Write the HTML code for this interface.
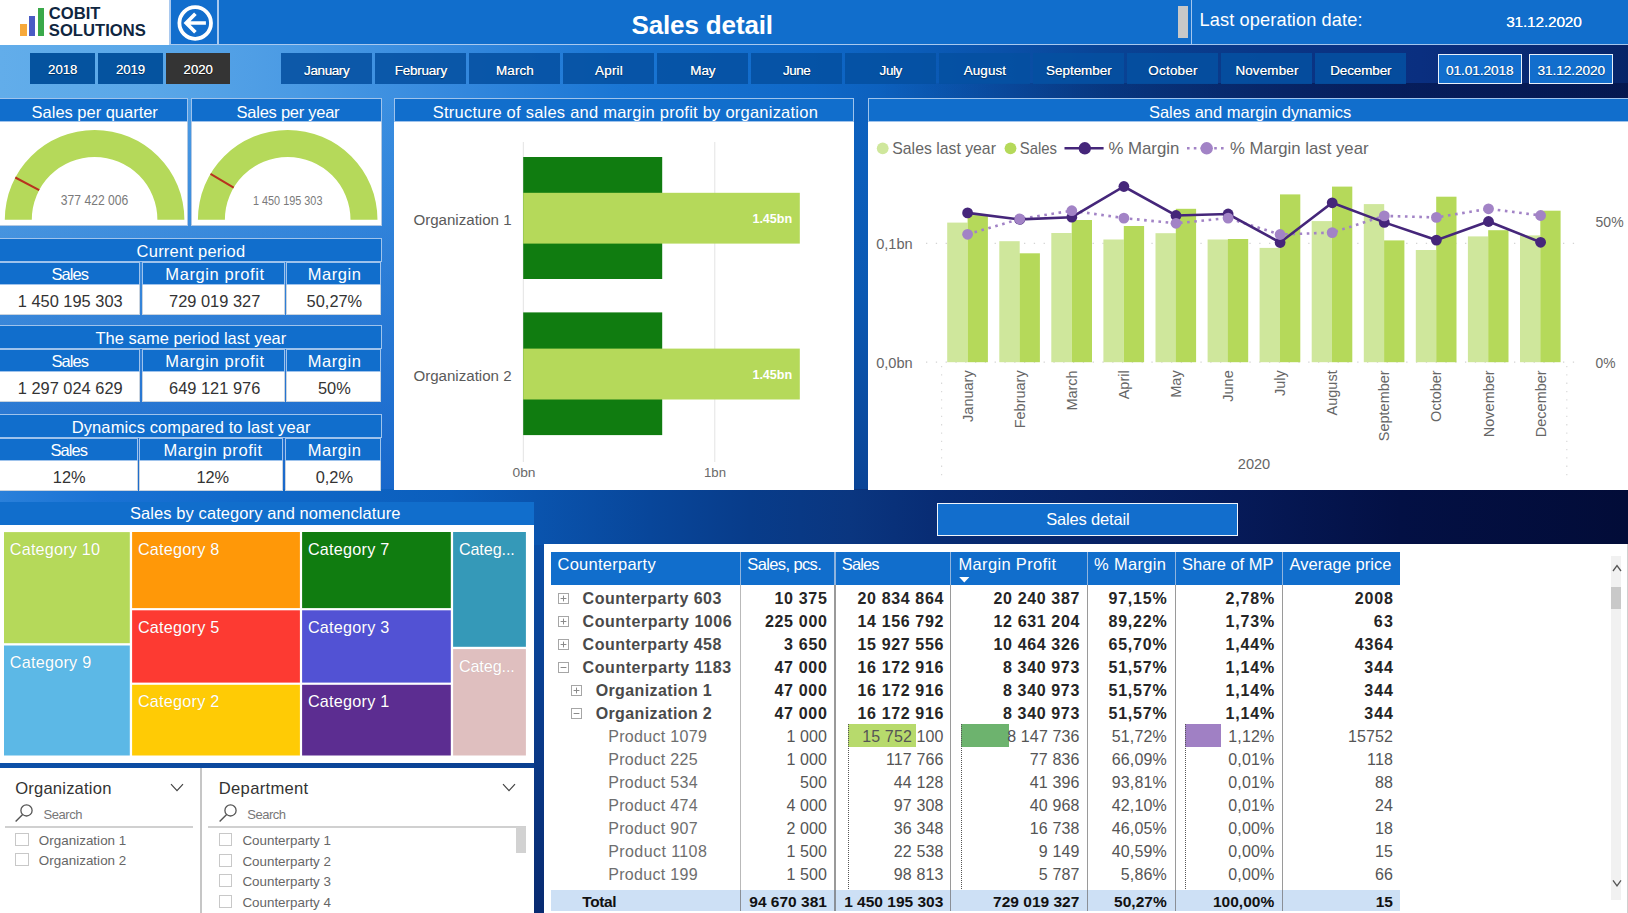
<!DOCTYPE html>
<html lang="en"><head><meta charset="utf-8"><title>Sales detail</title>
<style>
html,body{margin:0;padding:0}
body{width:1628px;height:913px;position:relative;overflow:hidden;font-family:"Liberation Sans",sans-serif;
background:linear-gradient(139deg,#62aeea 0%,#4f9fe6 10%,#3a8ee0 19%,#1a72d4 24%,#1263c2 33%,#0d5ab8 38%,#0a4a9e 45%,#0a3486 50%,#0a2c76 59%,#071e62 70%,#030e3a 88%,#030c34 100%);}
div,svg{position:absolute;box-sizing:border-box}
.hd{background:#116ecc;border:1px solid #9fc3ec}
.pn{background:#fff}
.btn{background:rgba(5,80,160,.88);height:30.4px;top:53.4px}
.vl{background:#fff;border:1px solid #c9d3de;border-top:0}
.t{position:absolute;white-space:nowrap}
.sd{text-shadow:0 1px 1px rgba(0,0,0,.45)}
</style></head><body>

<div style="left:0px;top:0px;width:1628px;height:100px;background:linear-gradient(to right,#62adea 0,#5aa7e8 150px,#4a9ae4 300px,#3589de 450px,#1a76d4 620px,#0f68c8 814px,#0b5cb8 920px,#0a50a8 1010px,#094496 1100px,#0a3a8a 1220px,#0a3484 1300px,#0a2f80 1420px,#072468 1628px)"></div>
<div style="left:880px;top:83px;width:748px;height:17px;background:linear-gradient(to right,rgba(3,14,60,0),rgba(3,14,60,.55) 70%)"></div>
<div style="left:0px;top:100px;width:396px;height:392px;background:linear-gradient(to bottom,rgba(12,90,196,0) 0%,rgba(12,90,196,.75) 100%),linear-gradient(to right,#5aa7e8,#3a8ee0)"></div>
<div style="left:852px;top:100px;width:18px;height:392px;background:linear-gradient(to bottom,#0d62c0,#0a58b2 50%,#0a4496)"></div>
<div style="left:0px;top:489px;width:1628px;height:57px;background:linear-gradient(to right,#2a80da 0,#1a72d4 100px,#1069ca 250px,#0b5ebc 450px,#0a54ae 534px,#08469a 650px,#083c8a 750px,#0a3680 850px,#082c74 937px,#061a58 1237px,#031044 1400px,#020c38 1628px)"></div>
<div style="left:532px;top:545px;width:14px;height:370px;background:linear-gradient(to bottom,#0a4ea6,#0a3c8c 45%,#082a70)"></div>
<div style="left:0px;top:761px;width:534px;height:9px;background:linear-gradient(to right,#0c50a8,#0a3f90)"></div>
<div style="left:0px;top:0px;width:169.3px;height:44.6px;background:#fff"></div>
<div style="left:20.2px;top:24.3px;width:6.4px;height:11.8px;background:#f7a93b"></div>
<div style="left:29px;top:16px;width:6.2px;height:20.1px;background:#4a5bc4"></div>
<div style="left:38px;top:8.1px;width:5.8px;height:28px;background:#3aa94a"></div>
<div class="t" style="left:48.8px;top:3.0px;font-size:16.6px;line-height:21px;color:#0f2640;font-weight:bold;">COBIT</div>
<div class="t" style="left:48.8px;top:19.8px;font-size:16.6px;line-height:21px;color:#0f2640;font-weight:bold;letter-spacing:0.02px;">SOLUTIONS</div>
<div style="left:169.3px;top:-1px;width:49.2px;height:46.2px;background:#126ecd;border:1.4px solid #a9c9ef;border-right-width:1px;border-left-width:2.2px"></div>
<svg style="left:175px;top:3px" width="40" height="40" viewBox="0 0 40 40"><circle cx="20.2" cy="20" r="15.8" fill="none" stroke="#fff" stroke-width="3.8"/><path d="M30.9 20H11.4M20.4 10.8L11.2 20l9.2 9.2" fill="none" stroke="#fff" stroke-width="3.7" stroke-linejoin="miter"/></svg>
<div style="left:217.6px;top:-1px;width:974.4px;height:46.2px;background:#116ecc;border:1.4px solid #a9c9ef"></div>
<div class="t" style="left:631.5px;top:9.1px;font-size:26px;line-height:33px;color:#fff;font-weight:bold;letter-spacing:-0.14px;">Sales detail</div>
<div style="left:1178.2px;top:6px;width:10px;height:31.6px;background:#c8c8c8"></div>
<div style="left:1191px;top:-1px;width:438px;height:46px;background:#116ecc;border:1px solid #a4c6ee"></div>
<div class="t" style="left:1199.5px;top:8.7px;font-size:18.2px;line-height:23px;color:#fff;letter-spacing:0.12px;">Last operation date:</div>
<div class="t" style="left:1506.2px;top:11.7px;font-size:15.4px;line-height:20px;color:#fff;letter-spacing:-0.16px;text-shadow:0 0 .6px #fff">31.12.2020</div>
<div class="btn" style="left:30.2px;width:65px;background:#05539f;"></div>
<div class="t" style="left:48.1px;top:60.5px;font-size:13.2px;line-height:17px;color:#fff;letter-spacing:-0.05px;text-shadow:0 1px 1px rgba(0,0,0,.45),0 0 .5px #fff">2018</div>
<div class="btn" style="left:98px;width:65px;background:#05539f;"></div>
<div class="t" style="left:115.9px;top:60.5px;font-size:13.2px;line-height:17px;color:#fff;letter-spacing:-0.05px;text-shadow:0 1px 1px rgba(0,0,0,.45),0 0 .5px #fff">2019</div>
<div class="btn" style="left:165.9px;width:64.5px;background:#343434;"></div>
<div class="t" style="left:183.6px;top:60.5px;font-size:13.2px;line-height:17px;color:#fff;letter-spacing:-0.05px;text-shadow:0 1px 1px rgba(0,0,0,.45),0 0 .5px #fff">2020</div>
<div class="btn" style="left:281.4px;width:91px"></div>
<div class="t" style="left:304.1px;top:61.5px;font-size:13.4px;line-height:17px;color:#fff;letter-spacing:-0.35px;text-shadow:0 1px 1px rgba(0,0,0,.45),0 0 .4px #fff">January</div>
<div class="btn" style="left:375.4px;width:91px"></div>
<div class="t" style="left:394.7px;top:61.5px;font-size:13.4px;line-height:17px;color:#fff;letter-spacing:-0.17px;text-shadow:0 1px 1px rgba(0,0,0,.45),0 0 .4px #fff">February</div>
<div class="btn" style="left:469.4px;width:91px"></div>
<div class="t" style="left:496.1px;top:61.5px;font-size:13.4px;line-height:17px;color:#fff;letter-spacing:0.09px;text-shadow:0 1px 1px rgba(0,0,0,.45),0 0 .4px #fff">March</div>
<div class="btn" style="left:563.4px;width:91px"></div>
<div class="t" style="left:595.0px;top:61.5px;font-size:13.4px;line-height:17px;color:#fff;letter-spacing:0.25px;text-shadow:0 1px 1px rgba(0,0,0,.45),0 0 .4px #fff">April</div>
<div class="btn" style="left:657.4px;width:91px"></div>
<div class="t" style="left:690.2px;top:61.5px;font-size:13.4px;line-height:17px;color:#fff;letter-spacing:0.04px;text-shadow:0 1px 1px rgba(0,0,0,.45),0 0 .4px #fff">May</div>
<div class="btn" style="left:751.4px;width:91px"></div>
<div class="t" style="left:783.1px;top:61.5px;font-size:13.4px;line-height:17px;color:#fff;letter-spacing:-0.49px;text-shadow:0 1px 1px rgba(0,0,0,.45),0 0 .4px #fff">June</div>
<div class="btn" style="left:845.4px;width:91px"></div>
<div class="t" style="left:879.6px;top:61.5px;font-size:13.4px;line-height:17px;color:#fff;letter-spacing:-0.41px;text-shadow:0 1px 1px rgba(0,0,0,.45),0 0 .4px #fff">July</div>
<div class="btn" style="left:939.4px;width:91px"></div>
<div class="t" style="left:963.7px;top:61.5px;font-size:13.4px;line-height:17px;color:#fff;letter-spacing:0.14px;text-shadow:0 1px 1px rgba(0,0,0,.45),0 0 .4px #fff">August</div>
<div class="btn" style="left:1033.4px;width:91px"></div>
<div class="t" style="left:1046.1px;top:61.5px;font-size:13.4px;line-height:17px;color:#fff;text-shadow:0 1px 1px rgba(0,0,0,.45),0 0 .4px #fff">September</div>
<div class="btn" style="left:1127.4px;width:91px"></div>
<div class="t" style="left:1148.3px;top:61.5px;font-size:13.4px;line-height:17px;color:#fff;letter-spacing:0.26px;text-shadow:0 1px 1px rgba(0,0,0,.45),0 0 .4px #fff">October</div>
<div class="btn" style="left:1221.4px;width:91px"></div>
<div class="t" style="left:1235.4px;top:61.5px;font-size:13.4px;line-height:17px;color:#fff;letter-spacing:0.17px;text-shadow:0 1px 1px rgba(0,0,0,.45),0 0 .4px #fff">November</div>
<div class="btn" style="left:1315.4px;width:91px"></div>
<div class="t" style="left:1330.2px;top:61.5px;font-size:13.4px;line-height:17px;color:#fff;letter-spacing:-0.06px;text-shadow:0 1px 1px rgba(0,0,0,.45),0 0 .4px #fff">December</div>
<div class="btn" style="left:1437.7px;width:84px;top:54.2px;height:29.4px;background:#126ecd;border:1.5px solid #e8f0fa"></div>
<div class="t" style="left:1445.9px;top:61.7px;font-size:13.6px;line-height:17px;color:#fff;letter-spacing:-0.05px;text-shadow:0 1px 1px rgba(0,0,0,.4),0 0 .5px #fff">01.01.2018</div>
<div class="btn" style="left:1529.3px;width:84px;top:54.2px;height:29.4px;background:#126ecd;border:1.5px solid #e8f0fa"></div>
<div class="t" style="left:1537.5px;top:61.7px;font-size:13.6px;line-height:17px;color:#fff;letter-spacing:-0.05px;text-shadow:0 1px 1px rgba(0,0,0,.4),0 0 .5px #fff">31.12.2020</div>
<div class="hd" style="left:-1px;top:98px;width:189.2px;height:24.3px;"></div>
<div class="t" style="left:31.6px;top:101.6px;font-size:16.5px;line-height:21px;color:#fff;letter-spacing:-0.02px;">Sales per quarter</div>
<div class="pn" style="left:-1px;top:122.3px;width:189.2px;height:104px;border:1px solid #b4c9e2;border-top:0"></div>
<svg style="left:-1px;top:122px" width="189.2" height="104" viewBox="-1 122 189.2 104"><path d="M4.799999999999997 219.7A89.8 89.8 0 0 1 184.39999999999998 219.7L157.39999999999998 219.7A62.8 62.8 0 0 0 31.799999999999997 219.7Z" fill="#b5d95a"/><line x1="15.3" y1="177.5" x2="39.2" y2="190.2" stroke="#b8321f" stroke-width="2"/><text x="94.6" y="205.1" text-anchor="middle" font-family='"Liberation Sans", sans-serif' font-size="14.6" fill="#7a7a7a" textLength="67.5" lengthAdjust="spacingAndGlyphs">377 422 006</text></svg>
<div class="hd" style="left:191.3px;top:98px;width:191.2px;height:24.3px;"></div>
<div class="t" style="left:236.6px;top:101.6px;font-size:16.5px;line-height:21px;color:#fff;letter-spacing:-0.26px;">Sales per year</div>
<div class="pn" style="left:191.3px;top:122.3px;width:191.2px;height:104px;border:1px solid #b4c9e2;border-top:0"></div>
<svg style="left:191.3px;top:122px" width="191.2" height="104" viewBox="191.3 122 191.2 104"><path d="M198.2 219.7A89.8 89.8 0 0 1 377.8 219.7L350.8 219.7A62.8 62.8 0 0 0 225.2 219.7Z" fill="#b5d95a"/><line x1="210.8" y1="173.9" x2="234.0" y2="187.6" stroke="#b8321f" stroke-width="2"/><text x="288" y="204.7" text-anchor="middle" font-family='"Liberation Sans", sans-serif' font-size="13.2" fill="#7a7a7a" textLength="69.5" lengthAdjust="spacingAndGlyphs">1 450 195 303</text></svg>
<div class="hd" style="left:-1px;top:238.2px;width:383px;height:23.6px;"></div>
<div class="t" style="left:136.6px;top:240.5px;font-size:16.5px;line-height:21px;color:#fff;letter-spacing:0.23px;">Current period</div>
<div class="hd" style="left:-1px;top:262.0px;width:140.5px;height:23.2px;"></div>
<div class="t" style="left:51.4px;top:264.0px;font-size:16.5px;line-height:21px;color:#fff;letter-spacing:-0.92px;">Sales</div>
<div class="vl" style="left:-1px;top:284.59999999999997px;width:140.5px;height:30.4px;"></div>
<div class="t" style="left:17.8px;top:290.9px;font-size:16.4px;line-height:21px;color:#333;">1 450 195 303</div>
<div class="hd" style="left:141.8px;top:262.0px;width:143.4px;height:23.2px;"></div>
<div class="t" style="left:165.3px;top:264.0px;font-size:16.5px;line-height:21px;color:#fff;letter-spacing:0.59px;">Margin profit</div>
<div class="vl" style="left:141.8px;top:284.59999999999997px;width:143.4px;height:30.4px;"></div>
<div class="t" style="left:169.1px;top:290.9px;font-size:16.4px;line-height:21px;color:#333;">729 019 327</div>
<div class="hd" style="left:285.8px;top:262.0px;width:95.4px;height:23.2px;"></div>
<div class="t" style="left:307.8px;top:264.0px;font-size:16.5px;line-height:21px;color:#fff;letter-spacing:0.55px;">Margin</div>
<div class="vl" style="left:285.8px;top:284.59999999999997px;width:95.4px;height:30.4px;"></div>
<div class="t" style="left:306.6px;top:290.9px;font-size:16.4px;line-height:21px;color:#333;">50,27%</div>
<div class="hd" style="left:-1px;top:325.4px;width:383px;height:23.6px;"></div>
<div class="t" style="left:95.5px;top:327.7px;font-size:16.5px;line-height:21px;color:#fff;">The same period last year</div>
<div class="hd" style="left:-1px;top:349.2px;width:140.5px;height:23.2px;"></div>
<div class="t" style="left:51.4px;top:351.2px;font-size:16.5px;line-height:21px;color:#fff;letter-spacing:-0.92px;">Sales</div>
<div class="vl" style="left:-1px;top:371.79999999999995px;width:140.5px;height:30.4px;"></div>
<div class="t" style="left:17.8px;top:378.1px;font-size:16.4px;line-height:21px;color:#333;">1 297 024 629</div>
<div class="hd" style="left:141.8px;top:349.2px;width:143.4px;height:23.2px;"></div>
<div class="t" style="left:165.3px;top:351.2px;font-size:16.5px;line-height:21px;color:#fff;letter-spacing:0.59px;">Margin profit</div>
<div class="vl" style="left:141.8px;top:371.79999999999995px;width:143.4px;height:30.4px;"></div>
<div class="t" style="left:169.1px;top:378.1px;font-size:16.4px;line-height:21px;color:#333;">649 121 976</div>
<div class="hd" style="left:285.8px;top:349.2px;width:95.4px;height:23.2px;"></div>
<div class="t" style="left:307.8px;top:351.2px;font-size:16.5px;line-height:21px;color:#fff;letter-spacing:0.55px;">Margin</div>
<div class="vl" style="left:285.8px;top:371.79999999999995px;width:95.4px;height:30.4px;"></div>
<div class="t" style="left:318.0px;top:378.1px;font-size:16.4px;line-height:21px;color:#333;">50%</div>
<div class="hd" style="left:-1px;top:414.2px;width:383px;height:23.6px;"></div>
<div class="t" style="left:71.7px;top:416.5px;font-size:16.5px;line-height:21px;color:#fff;letter-spacing:0.11px;">Dynamics compared to last year</div>
<div class="hd" style="left:-1px;top:438.0px;width:138.8px;height:23.2px;"></div>
<div class="t" style="left:50.4px;top:440.0px;font-size:16.5px;line-height:21px;color:#fff;letter-spacing:-0.92px;">Sales</div>
<div class="vl" style="left:-1px;top:460.59999999999997px;width:138.8px;height:30.4px;"></div>
<div class="t" style="left:52.8px;top:466.9px;font-size:16.4px;line-height:21px;color:#333;">12%</div>
<div class="hd" style="left:139px;top:438.0px;width:144.2px;height:23.2px;"></div>
<div class="t" style="left:163.4px;top:440.0px;font-size:16.5px;line-height:21px;color:#fff;letter-spacing:0.59px;">Margin profit</div>
<div class="vl" style="left:139px;top:460.59999999999997px;width:144.2px;height:30.4px;"></div>
<div class="t" style="left:196.4px;top:466.9px;font-size:16.4px;line-height:21px;color:#333;">12%</div>
<div class="hd" style="left:285.2px;top:438.0px;width:96px;height:23.2px;"></div>
<div class="t" style="left:307.8px;top:440.0px;font-size:16.5px;line-height:21px;color:#fff;letter-spacing:0.55px;">Margin</div>
<div class="vl" style="left:285.2px;top:460.59999999999997px;width:96px;height:30.4px;"></div>
<div class="t" style="left:315.7px;top:466.9px;font-size:16.4px;line-height:21px;color:#333;">0,2%</div>
<div class="hd" style="left:393.8px;top:98px;width:460.6px;height:24.3px;"></div>
<div class="t" style="left:432.8px;top:101.6px;font-size:16.5px;line-height:21px;color:#fff;letter-spacing:0.23px;">Structure of sales and margin profit by organization</div>
<div class="pn" style="left:393.8px;top:122.3px;width:460.6px;height:367.6px;"></div>
<svg style="left:394px;top:122px" width="460" height="368" viewBox="394 122 460 368"><path d="M523.3 142V462M714.8 142V462" stroke="#e3e3e3" stroke-width="1"/><rect x="523.2" y="157" width="139" height="122.0" fill="#107c10"/><rect x="523.2" y="192.8" width="276.6" height="50.8" fill="#b5d95a"/><text x="511.6" y="225" text-anchor="end" font-family='"Liberation Sans", sans-serif' font-size="15.1" fill="#5a5a5a">Organization 1</text><text x="792.2" y="223.2" text-anchor="end" font-family='"Liberation Sans", sans-serif' font-size="13" font-weight="bold" fill="#fff" textLength="39.8" lengthAdjust="spacingAndGlyphs">1.45bn</text><rect x="523.2" y="312.4" width="139" height="122.7" fill="#107c10"/><rect x="523.2" y="348.6" width="276.6" height="50.9" fill="#b5d95a"/><text x="511.6" y="380.9" text-anchor="end" font-family='"Liberation Sans", sans-serif' font-size="15.1" fill="#5a5a5a">Organization 2</text><text x="792.2" y="379.4" text-anchor="end" font-family='"Liberation Sans", sans-serif' font-size="13" font-weight="bold" fill="#fff" textLength="39.8" lengthAdjust="spacingAndGlyphs">1.45bn</text><text x="524" y="476.7" text-anchor="middle" font-family='"Liberation Sans", sans-serif' font-size="13" fill="#6a6a6a" textLength="23" lengthAdjust="spacingAndGlyphs">0bn</text><text x="715" y="476.7" text-anchor="middle" font-family='"Liberation Sans", sans-serif' font-size="13" fill="#6a6a6a" textLength="22" lengthAdjust="spacingAndGlyphs">1bn</text></svg>
<div class="hd" style="left:867.6px;top:98px;width:761px;height:24.3px;"></div>
<div class="t" style="left:1148.9px;top:101.6px;font-size:16.5px;line-height:21px;color:#fff;letter-spacing:-0.01px;">Sales and margin dynamics</div>
<div class="pn" style="left:867.6px;top:122.3px;width:761px;height:367.4px;"></div>
<svg style="left:868px;top:122px" width="760" height="368" viewBox="868 122 760 368"><circle cx="882.7" cy="148.3" r="5.9" fill="#cfe79c"/><text x="892.3" y="153.8" font-family='"Liberation Sans", sans-serif' font-size="15.7" fill="#666" textLength="103.6" lengthAdjust="spacingAndGlyphs">Sales last year</text><circle cx="1010.5" cy="148.3" r="5.9" fill="#b5d95a"/><text x="1019.8" y="153.8" font-family='"Liberation Sans", sans-serif' font-size="15.7" fill="#666" textLength="37.2" lengthAdjust="spacingAndGlyphs">Sales</text><path d="M1064.5 148.3H1103.6" stroke="#45267a" stroke-width="2.6"/><circle cx="1084.8" cy="148.3" r="6.2" fill="#45267a"/><text x="1108.4" y="153.8" font-family='"Liberation Sans", sans-serif' font-size="15.7" fill="#666" textLength="71" lengthAdjust="spacingAndGlyphs">% Margin</text><path d="M1187 148.3H1226" stroke="#a283c6" stroke-width="2.6" stroke-dasharray="2.6 4.2"/><circle cx="1206.7" cy="148.3" r="6.2" fill="#a283c6"/><text x="1230" y="153.8" font-family='"Liberation Sans", sans-serif' font-size="15.7" fill="#666" textLength="138.5" lengthAdjust="spacingAndGlyphs">% Margin last year</text><path d="M926 243.4H1582M926 362.2H1582" stroke="#d4d4d4" stroke-width="1.2" stroke-dasharray="1.3 8.5" /><path d="M941.6 366V478M1566.8 366V478" stroke="#d9d9d9" stroke-width="1.2" stroke-dasharray="1.3 7" /><rect x="947.2" y="222.6" width="20.4" height="139.6" fill="#cfe79c"/><rect x="967.6" y="215.1" width="20.3" height="147.1" fill="#b5d95a"/><rect x="999.3" y="241.2" width="20.4" height="121.0" fill="#cfe79c"/><rect x="1019.6" y="253.3" width="20.3" height="108.9" fill="#b5d95a"/><rect x="1051.3" y="233" width="20.4" height="129.2" fill="#cfe79c"/><rect x="1071.7" y="220" width="20.3" height="142.2" fill="#b5d95a"/><rect x="1103.4" y="239.5" width="20.4" height="122.7" fill="#cfe79c"/><rect x="1123.8" y="226" width="20.3" height="136.2" fill="#b5d95a"/><rect x="1155.5" y="233.2" width="20.4" height="129.0" fill="#cfe79c"/><rect x="1175.8" y="208.8" width="20.3" height="153.4" fill="#b5d95a"/><rect x="1207.6" y="239.5" width="20.4" height="122.7" fill="#cfe79c"/><rect x="1227.9" y="239" width="20.3" height="123.2" fill="#b5d95a"/><rect x="1259.6" y="247.9" width="20.4" height="114.3" fill="#cfe79c"/><rect x="1280.0" y="194.4" width="20.3" height="167.8" fill="#b5d95a"/><rect x="1311.7" y="221.1" width="20.4" height="141.1" fill="#cfe79c"/><rect x="1332.0" y="186.6" width="20.3" height="175.6" fill="#b5d95a"/><rect x="1363.8" y="204.1" width="20.4" height="158.1" fill="#cfe79c"/><rect x="1384.1" y="240.4" width="20.3" height="121.8" fill="#b5d95a"/><rect x="1415.8" y="250" width="20.4" height="112.2" fill="#cfe79c"/><rect x="1436.2" y="196.7" width="20.3" height="165.5" fill="#b5d95a"/><rect x="1467.9" y="236.4" width="20.4" height="125.8" fill="#cfe79c"/><rect x="1488.2" y="230.2" width="20.3" height="132.0" fill="#b5d95a"/><rect x="1520.0" y="235.4" width="20.4" height="126.8" fill="#cfe79c"/><rect x="1540.3" y="210.7" width="20.3" height="151.5" fill="#b5d95a"/><polyline fill="none" stroke="#a283c6" stroke-width="2.6" stroke-dasharray="2.6 4.6" points="967.6,234.3 1019.7,219 1071.8,210.7 1123.9,218.1 1176.0,223.3 1228.1,218.1 1280.1,234.5 1332.2,232.6 1384.3,215.9 1436.4,217.4 1488.5,208.8 1540.6,215.5"/><polyline fill="none" stroke="#45267a" stroke-width="2.6" points="967.6,212.9 1019.7,219.4 1071.8,217.2 1123.9,186.5 1176.0,215.5 1228.1,214 1280.1,242.5 1332.2,202.8 1384.3,222.4 1436.4,240.1 1488.5,221.5 1540.6,242.3"/><circle cx="967.6" cy="212.9" r="5.4" fill="#45267a"/><circle cx="1019.7" cy="219.4" r="5.4" fill="#45267a"/><circle cx="1071.8" cy="217.2" r="5.4" fill="#45267a"/><circle cx="1123.9" cy="186.5" r="5.4" fill="#45267a"/><circle cx="1176.0" cy="215.5" r="5.4" fill="#45267a"/><circle cx="1228.1" cy="214" r="5.4" fill="#45267a"/><circle cx="1280.1" cy="242.5" r="5.4" fill="#45267a"/><circle cx="1332.2" cy="202.8" r="5.4" fill="#45267a"/><circle cx="1384.3" cy="222.4" r="5.4" fill="#45267a"/><circle cx="1436.4" cy="240.1" r="5.4" fill="#45267a"/><circle cx="1488.5" cy="221.5" r="5.4" fill="#45267a"/><circle cx="1540.6" cy="242.3" r="5.4" fill="#45267a"/><circle cx="967.6" cy="234.3" r="5.4" fill="#a283c6"/><circle cx="1019.7" cy="219" r="5.4" fill="#a283c6"/><circle cx="1071.8" cy="210.7" r="5.4" fill="#a283c6"/><circle cx="1123.9" cy="218.1" r="5.4" fill="#a283c6"/><circle cx="1176.0" cy="223.3" r="5.4" fill="#a283c6"/><circle cx="1228.1" cy="218.1" r="5.4" fill="#a283c6"/><circle cx="1280.1" cy="234.5" r="5.4" fill="#a283c6"/><circle cx="1332.2" cy="232.6" r="5.4" fill="#a283c6"/><circle cx="1384.3" cy="215.9" r="5.4" fill="#a283c6"/><circle cx="1436.4" cy="217.4" r="5.4" fill="#a283c6"/><circle cx="1488.5" cy="208.8" r="5.4" fill="#a283c6"/><circle cx="1540.6" cy="215.5" r="5.4" fill="#a283c6"/><text x="876.2" y="248.6" font-family='"Liberation Sans", sans-serif' font-size="14.6" fill="#666">0,1bn</text><text x="876.2" y="367.6" font-family='"Liberation Sans", sans-serif' font-size="14.6" fill="#666">0,0bn</text><text x="1623.6" y="226.6" text-anchor="end" font-family='"Liberation Sans", sans-serif' font-size="14.6" fill="#666" textLength="28" lengthAdjust="spacingAndGlyphs">50%</text><text x="1615.5" y="367.6" text-anchor="end" font-family='"Liberation Sans", sans-serif' font-size="14.6" fill="#666" textLength="20" lengthAdjust="spacingAndGlyphs">0%</text><text transform="translate(972.6 370.3) rotate(-90)" text-anchor="end" font-family='"Liberation Sans", sans-serif' font-size="14.5" fill="#666">January</text><text transform="translate(1024.7 370.3) rotate(-90)" text-anchor="end" font-family='"Liberation Sans", sans-serif' font-size="14.5" fill="#666">February</text><text transform="translate(1076.8 370.3) rotate(-90)" text-anchor="end" font-family='"Liberation Sans", sans-serif' font-size="14.5" fill="#666">March</text><text transform="translate(1128.9 370.3) rotate(-90)" text-anchor="end" font-family='"Liberation Sans", sans-serif' font-size="14.5" fill="#666">April</text><text transform="translate(1181.0 370.3) rotate(-90)" text-anchor="end" font-family='"Liberation Sans", sans-serif' font-size="14.5" fill="#666">May</text><text transform="translate(1233.1 370.3) rotate(-90)" text-anchor="end" font-family='"Liberation Sans", sans-serif' font-size="14.5" fill="#666">June</text><text transform="translate(1285.1 370.3) rotate(-90)" text-anchor="end" font-family='"Liberation Sans", sans-serif' font-size="14.5" fill="#666">July</text><text transform="translate(1337.2 370.3) rotate(-90)" text-anchor="end" font-family='"Liberation Sans", sans-serif' font-size="14.5" fill="#666">August</text><text transform="translate(1389.3 370.3) rotate(-90)" text-anchor="end" font-family='"Liberation Sans", sans-serif' font-size="14.5" fill="#666">September</text><text transform="translate(1441.4 370.3) rotate(-90)" text-anchor="end" font-family='"Liberation Sans", sans-serif' font-size="14.5" fill="#666">October</text><text transform="translate(1493.5 370.3) rotate(-90)" text-anchor="end" font-family='"Liberation Sans", sans-serif' font-size="14.5" fill="#666">November</text><text transform="translate(1545.6 370.3) rotate(-90)" text-anchor="end" font-family='"Liberation Sans", sans-serif' font-size="14.5" fill="#666">December</text><text x="1254" y="469" text-anchor="middle" font-family='"Liberation Sans", sans-serif' font-size="14.6" fill="#666">2020</text></svg>
<div class="hd" style="left:-1px;top:502px;width:535px;height:22.6px;border:0"></div>
<div class="t" style="left:130.0px;top:503.3px;font-size:16.5px;line-height:21px;color:#fff;letter-spacing:0.08px;">Sales by category and nomenclature</div>
<div class="pn" style="left:-1px;top:524.5px;width:535px;height:238.6px;"></div>
<svg style="left:0;top:528px" width="534" height="232" viewBox="0 528 534 232"><rect x="4" y="532.1" width="125.8" height="111.1" fill="#b5d95a"/><rect x="4" y="645.5" width="125.8" height="110" fill="#5cb8e6"/><rect x="132.1" y="532" width="167.8" height="76.1" fill="#ff9808"/><rect x="132.1" y="610.3" width="167.8" height="72.3" fill="#fd3a32"/><rect x="132.1" y="684.8" width="167.8" height="70.7" fill="#ffcb05"/><rect x="302.1" y="532" width="148.7" height="76.1" fill="#107c10"/><rect x="302.1" y="610.3" width="148.7" height="72.3" fill="#5252d4"/><rect x="302.1" y="684.8" width="148.7" height="70.7" fill="#5c2d91"/><rect x="453.1" y="532" width="72.8" height="114.8" fill="#3599b8"/><rect x="453.1" y="649.1" width="72.8" height="106.4" fill="#dfbfbf"/></svg>
<div class="t" style="left:9.8px;top:538.6px;font-size:16.2px;line-height:21px;color:#fff;letter-spacing:0.21px;text-shadow:0 0 1px rgba(0,0,0,.12)">Category 10</div>
<div class="t" style="left:9.8px;top:652.0px;font-size:16.2px;line-height:21px;color:#fff;letter-spacing:0.24px;text-shadow:0 0 1px rgba(0,0,0,.12)">Category 9</div>
<div class="t" style="left:137.9px;top:538.5px;font-size:16.2px;line-height:21px;color:#fff;letter-spacing:0.24px;text-shadow:0 0 1px rgba(0,0,0,.12)">Category 8</div>
<div class="t" style="left:137.9px;top:616.8px;font-size:16.2px;line-height:21px;color:#fff;letter-spacing:0.24px;text-shadow:0 0 1px rgba(0,0,0,.12)">Category 5</div>
<div class="t" style="left:137.9px;top:691.3px;font-size:16.2px;line-height:21px;color:#fff;letter-spacing:0.24px;text-shadow:0 0 1px rgba(0,0,0,.12)">Category 2</div>
<div class="t" style="left:307.9px;top:538.5px;font-size:16.2px;line-height:21px;color:#fff;letter-spacing:0.24px;text-shadow:0 0 1px rgba(0,0,0,.12)">Category 7</div>
<div class="t" style="left:307.9px;top:616.8px;font-size:16.2px;line-height:21px;color:#fff;letter-spacing:0.24px;text-shadow:0 0 1px rgba(0,0,0,.12)">Category 3</div>
<div class="t" style="left:307.9px;top:691.3px;font-size:16.2px;line-height:21px;color:#fff;letter-spacing:0.24px;text-shadow:0 0 1px rgba(0,0,0,.12)">Category 1</div>
<div class="t" style="left:458.9px;top:538.5px;font-size:16.2px;line-height:21px;color:#fff;letter-spacing:-0.11px;text-shadow:0 0 1px rgba(0,0,0,.12)">Categ...</div>
<div class="t" style="left:458.9px;top:655.6px;font-size:16.2px;line-height:21px;color:#fff;letter-spacing:-0.11px;text-shadow:0 0 1px rgba(0,0,0,.12)">Categ...</div>
<div class="pn" style="left:-1px;top:768.2px;width:201px;height:146px;"></div>
<div style="left:200px;top:768.2px;width:1.8px;height:146px;background:#c6c6c6"></div>
<div class="pn" style="left:201.8px;top:768.2px;width:331.8px;height:146px;"></div>
<div class="t" style="left:15.2px;top:777.7px;font-size:16.6px;line-height:21px;color:#333;letter-spacing:0.19px;">Organization</div>
<svg style="left:169.4px;top:781px" width="16" height="14" viewBox="0 0 16 14"><path d="M2 3.2L8 9.6L14 3.2" fill="none" stroke="#444" stroke-width="1.2"/></svg>
<svg  style="left:13px;top:801.2px" width="24" height="24" viewBox="0 0 24 24"><circle cx="13.5" cy="9.4" r="5.6" fill="none" stroke="#555" stroke-width="1.3"/><path d="M9.6 13.4L2.6 20.6" stroke="#555" stroke-width="1.4"/></svg>
<div class="t" style="left:43.6px;top:806.0px;font-size:13px;line-height:17px;color:#777;letter-spacing:-0.48px;">Search</div>
<div style="left:5.3px;top:826px;width:187.89999999999998px;height:1.8px;background:#d0d0d0"></div>
<div style="left:15.2px;top:832.7px;width:13.4px;height:13.2px;border:1px solid #c8c8c8;background:#fff"></div>
<div class="t" style="left:38.8px;top:831.5px;font-size:13.4px;line-height:17px;color:#666;letter-spacing:0.03px;">Organization 1</div>
<div style="left:15.2px;top:853.1px;width:13.4px;height:13.2px;border:1px solid #c8c8c8;background:#fff"></div>
<div class="t" style="left:38.8px;top:851.9px;font-size:13.4px;line-height:17px;color:#666;letter-spacing:0.03px;">Organization 2</div>
<div class="t" style="left:218.8px;top:777.7px;font-size:16.6px;line-height:21px;color:#333;letter-spacing:0.30px;">Department</div>
<svg style="left:501.4px;top:781px" width="16" height="14" viewBox="0 0 16 14"><path d="M2 3.2L8 9.6L14 3.2" fill="none" stroke="#444" stroke-width="1.2"/></svg>
<svg  style="left:216.6px;top:801.2px" width="24" height="24" viewBox="0 0 24 24"><circle cx="13.5" cy="9.4" r="5.6" fill="none" stroke="#555" stroke-width="1.3"/><path d="M9.6 13.4L2.6 20.6" stroke="#555" stroke-width="1.4"/></svg>
<div class="t" style="left:247.2px;top:806.0px;font-size:13px;line-height:17px;color:#777;letter-spacing:-0.48px;">Search</div>
<div style="left:208.4px;top:826px;width:317.5px;height:1.8px;background:#d0d0d0"></div>
<div style="left:218.79999999999998px;top:833.2px;width:13.4px;height:13.2px;border:1px solid #c8c8c8;background:#fff"></div>
<div class="t" style="left:242.4px;top:832.0px;font-size:13.4px;line-height:17px;color:#666;">Counterparty 1</div>
<div style="left:218.79999999999998px;top:853.7px;width:13.4px;height:13.2px;border:1px solid #c8c8c8;background:#fff"></div>
<div class="t" style="left:242.4px;top:852.5px;font-size:13.4px;line-height:17px;color:#666;">Counterparty 2</div>
<div style="left:218.79999999999998px;top:874.2px;width:13.4px;height:13.2px;border:1px solid #c8c8c8;background:#fff"></div>
<div class="t" style="left:242.4px;top:873.0px;font-size:13.4px;line-height:17px;color:#666;">Counterparty 3</div>
<div style="left:218.79999999999998px;top:894.7px;width:13.4px;height:13.2px;border:1px solid #c8c8c8;background:#fff"></div>
<div class="t" style="left:242.4px;top:893.5px;font-size:13.4px;line-height:17px;color:#666;">Counterparty 4</div>
<div style="left:515.8px;top:827.2px;width:10.1px;height:25.5px;background:#d2d2d2"></div>
<div style="left:937.2px;top:503px;width:300.4px;height:32.5px;background:#126ecd;border:1.6px solid #f0f5fb"></div>
<div class="t" style="left:1046.2px;top:509.4px;font-size:16.5px;line-height:21px;color:#fff;letter-spacing:-0.16px;">Sales detail</div>
<div class="pn" style="left:543.6px;top:544.2px;width:1084px;height:370px;border-right:1px solid #d0d0d0"></div>
<div style="left:551.2px;top:552px;width:849px;height:33px;background:#116ecc"></div>
<div class="t" style="left:557.5px;top:553.6px;font-size:16.5px;line-height:21px;color:#fff;letter-spacing:0.25px;">Counterparty</div>
<div class="t" style="left:747.3px;top:553.6px;font-size:16.5px;line-height:21px;color:#fff;letter-spacing:-0.62px;">Sales, pcs.</div>
<div class="t" style="left:841.8px;top:553.6px;font-size:16.5px;line-height:21px;color:#fff;letter-spacing:-0.92px;">Sales</div>
<div class="t" style="left:958.5px;top:553.6px;font-size:16.5px;line-height:21px;color:#fff;letter-spacing:0.33px;">Margin Profit</div>
<div class="t" style="left:1094.1px;top:553.6px;font-size:16.5px;line-height:21px;color:#fff;letter-spacing:0.29px;">% Margin</div>
<div class="t" style="left:1182.1px;top:553.6px;font-size:16.5px;line-height:21px;color:#fff;letter-spacing:-0.04px;">Share of MP</div>
<div class="t" style="left:1289.5px;top:553.6px;font-size:16.5px;line-height:21px;color:#fff;letter-spacing:0.03px;">Average price</div>
<svg style="left:958px;top:576px" width="14" height="8" viewBox="0 0 14 8"><path d="M1.2 1h10.2L6.3 6.6z" fill="#fff"/></svg>
<div style="left:739.9px;top:552px;width:1.3px;height:33px;background:#8fb4de"></div>
<div style="left:739.9px;top:585px;width:1.3px;height:326px;background:#b9b9b9"></div>
<div style="left:834.3px;top:552px;width:1.3px;height:33px;background:#8fb4de"></div>
<div style="left:834.3px;top:585px;width:1.3px;height:326px;background:#9a9a9a"></div>
<div style="left:950.1px;top:552px;width:1.3px;height:33px;background:#8fb4de"></div>
<div style="left:950.1px;top:585px;width:1.3px;height:326px;background:#9a9a9a"></div>
<div style="left:1087.0px;top:552px;width:1.3px;height:33px;background:#8fb4de"></div>
<div style="left:1087.0px;top:585px;width:1.3px;height:326px;background:#9a9a9a"></div>
<div style="left:1174.7px;top:552px;width:1.3px;height:33px;background:#8fb4de"></div>
<div style="left:1174.7px;top:585px;width:1.3px;height:326px;background:#9a9a9a"></div>
<div style="left:1281.7px;top:552px;width:1.3px;height:33px;background:#8fb4de"></div>
<div style="left:1281.7px;top:585px;width:1.3px;height:326px;background:#9a9a9a"></div>
<div style="left:551.2px;top:890.4px;width:849.2px;height:20.2px;background:#cde0f5"></div>
<div style="left:739.9px;top:890.4px;width:1.3px;height:20.2px;background:#8a8f96"></div>
<div style="left:834.3px;top:890.4px;width:1.3px;height:20.2px;background:#8a8f96"></div>
<div style="left:950.1px;top:890.4px;width:1.3px;height:20.2px;background:#8a8f96"></div>
<div style="left:1087.0px;top:890.4px;width:1.3px;height:20.2px;background:#8a8f96"></div>
<div style="left:1174.7px;top:890.4px;width:1.3px;height:20.2px;background:#8a8f96"></div>
<div style="left:1281.7px;top:890.4px;width:1.3px;height:20.2px;background:#8a8f96"></div>
<div style="left:848px;top:724px;width:68.2px;height:22.9px;background:#b7da6c"></div>
<div style="left:961px;top:724px;width:47.8px;height:22.9px;background:#6db36e"></div>
<div style="left:1185px;top:724px;width:36px;height:22.5px;background:#a080c4"></div>
<div style="left:847.6px;top:724px;width:1px;height:165px;border-left:1px dotted #555"></div>
<div style="left:960.6px;top:724px;width:1px;height:165px;border-left:1px dotted #555"></div>
<div style="left:1184.6px;top:724px;width:1px;height:165px;border-left:1px dotted #555"></div>
<div class="t" style="left:582.6px;top:589.4px;font-size:16px;line-height:20px;color:#4a4a4a;font-weight:bold;letter-spacing:0.48px;">Counterparty 603</div>
<svg style="left:558.4px;top:592.9px" width="11" height="11" viewBox="0 0 11 11"><rect x=".5" y=".5" width="10" height="10" fill="#fff" stroke="#a6a6a6"/><path d="M2.6 5.5h5.8M5.5 2.6v5.8" stroke="#8a8a8a" stroke-width="1"/></svg>
<div class="t" style="left:774.4px;top:589.4px;font-size:16px;line-height:20px;color:#252525;font-weight:bold;letter-spacing:0.70px;">10 375</div>
<div class="t" style="left:857.5px;top:589.4px;font-size:16px;line-height:20px;color:#252525;font-weight:bold;letter-spacing:0.64px;">20 834 864</div>
<div class="t" style="left:993.5px;top:589.4px;font-size:16px;line-height:20px;color:#252525;font-weight:bold;letter-spacing:0.64px;">20 240 387</div>
<div class="t" style="left:1108.5px;top:589.4px;font-size:16px;line-height:20px;color:#252525;font-weight:bold;letter-spacing:0.78px;">97,15%</div>
<div class="t" style="left:1225.6px;top:589.4px;font-size:16px;line-height:20px;color:#252525;font-weight:bold;letter-spacing:0.82px;">2,78%</div>
<div class="t" style="left:1354.7px;top:589.4px;font-size:16px;line-height:20px;color:#252525;font-weight:bold;letter-spacing:0.85px;">2008</div>
<div class="t" style="left:582.6px;top:612.4px;font-size:16px;line-height:20px;color:#4a4a4a;font-weight:bold;letter-spacing:0.53px;">Counterparty 1006</div>
<svg style="left:558.4px;top:615.9px" width="11" height="11" viewBox="0 0 11 11"><rect x=".5" y=".5" width="10" height="10" fill="#fff" stroke="#a6a6a6"/><path d="M2.6 5.5h5.8M5.5 2.6v5.8" stroke="#8a8a8a" stroke-width="1"/></svg>
<div class="t" style="left:764.9px;top:612.4px;font-size:16px;line-height:20px;color:#252525;font-weight:bold;letter-spacing:0.69px;">225 000</div>
<div class="t" style="left:857.5px;top:612.4px;font-size:16px;line-height:20px;color:#252525;font-weight:bold;letter-spacing:0.64px;">14 156 792</div>
<div class="t" style="left:993.5px;top:612.4px;font-size:16px;line-height:20px;color:#252525;font-weight:bold;letter-spacing:0.64px;">12 631 204</div>
<div class="t" style="left:1108.5px;top:612.4px;font-size:16px;line-height:20px;color:#252525;font-weight:bold;letter-spacing:0.78px;">89,22%</div>
<div class="t" style="left:1225.6px;top:612.4px;font-size:16px;line-height:20px;color:#252525;font-weight:bold;letter-spacing:0.82px;">1,73%</div>
<div class="t" style="left:1373.8px;top:612.4px;font-size:16px;line-height:20px;color:#252525;font-weight:bold;letter-spacing:1.28px;">63</div>
<div class="t" style="left:582.6px;top:635.4px;font-size:16px;line-height:20px;color:#4a4a4a;font-weight:bold;letter-spacing:0.48px;">Counterparty 458</div>
<svg style="left:558.4px;top:638.9px" width="11" height="11" viewBox="0 0 11 11"><rect x=".5" y=".5" width="10" height="10" fill="#fff" stroke="#a6a6a6"/><path d="M2.6 5.5h5.8M5.5 2.6v5.8" stroke="#8a8a8a" stroke-width="1"/></svg>
<div class="t" style="left:784.0px;top:635.4px;font-size:16px;line-height:20px;color:#252525;font-weight:bold;letter-spacing:0.72px;">3 650</div>
<div class="t" style="left:857.5px;top:635.4px;font-size:16px;line-height:20px;color:#252525;font-weight:bold;letter-spacing:0.64px;">15 927 556</div>
<div class="t" style="left:993.5px;top:635.4px;font-size:16px;line-height:20px;color:#252525;font-weight:bold;letter-spacing:0.64px;">10 464 326</div>
<div class="t" style="left:1108.5px;top:635.4px;font-size:16px;line-height:20px;color:#252525;font-weight:bold;letter-spacing:0.78px;">65,70%</div>
<div class="t" style="left:1225.6px;top:635.4px;font-size:16px;line-height:20px;color:#252525;font-weight:bold;letter-spacing:0.82px;">1,44%</div>
<div class="t" style="left:1354.7px;top:635.4px;font-size:16px;line-height:20px;color:#252525;font-weight:bold;letter-spacing:0.85px;">4364</div>
<div class="t" style="left:582.6px;top:658.4px;font-size:16px;line-height:20px;color:#4a4a4a;font-weight:bold;letter-spacing:0.56px;">Counterparty 1183</div>
<svg style="left:558.4px;top:661.9px" width="11" height="11" viewBox="0 0 11 11"><rect x=".5" y=".5" width="10" height="10" fill="#fff" stroke="#a6a6a6"/><path d="M2.6 5.5h5.8" stroke="#8a8a8a" stroke-width="1"/></svg>
<div class="t" style="left:774.4px;top:658.4px;font-size:16px;line-height:20px;color:#252525;font-weight:bold;letter-spacing:0.70px;">47 000</div>
<div class="t" style="left:857.5px;top:658.4px;font-size:16px;line-height:20px;color:#252525;font-weight:bold;letter-spacing:0.64px;">16 172 916</div>
<div class="t" style="left:1003.0px;top:658.4px;font-size:16px;line-height:20px;color:#252525;font-weight:bold;letter-spacing:0.64px;">8 340 973</div>
<div class="t" style="left:1108.5px;top:658.4px;font-size:16px;line-height:20px;color:#252525;font-weight:bold;letter-spacing:0.78px;">51,57%</div>
<div class="t" style="left:1225.6px;top:658.4px;font-size:16px;line-height:20px;color:#252525;font-weight:bold;letter-spacing:0.82px;">1,14%</div>
<div class="t" style="left:1364.3px;top:658.4px;font-size:16px;line-height:20px;color:#252525;font-weight:bold;letter-spacing:0.96px;">344</div>
<div class="t" style="left:595.7px;top:681.4px;font-size:16px;line-height:20px;color:#4a4a4a;font-weight:bold;letter-spacing:0.38px;">Organization 1</div>
<svg style="left:570.8px;top:684.9px" width="11" height="11" viewBox="0 0 11 11"><rect x=".5" y=".5" width="10" height="10" fill="#fff" stroke="#a6a6a6"/><path d="M2.6 5.5h5.8M5.5 2.6v5.8" stroke="#8a8a8a" stroke-width="1"/></svg>
<div class="t" style="left:774.4px;top:681.4px;font-size:16px;line-height:20px;color:#252525;font-weight:bold;letter-spacing:0.70px;">47 000</div>
<div class="t" style="left:857.5px;top:681.4px;font-size:16px;line-height:20px;color:#252525;font-weight:bold;letter-spacing:0.64px;">16 172 916</div>
<div class="t" style="left:1003.0px;top:681.4px;font-size:16px;line-height:20px;color:#252525;font-weight:bold;letter-spacing:0.64px;">8 340 973</div>
<div class="t" style="left:1108.5px;top:681.4px;font-size:16px;line-height:20px;color:#252525;font-weight:bold;letter-spacing:0.78px;">51,57%</div>
<div class="t" style="left:1225.6px;top:681.4px;font-size:16px;line-height:20px;color:#252525;font-weight:bold;letter-spacing:0.82px;">1,14%</div>
<div class="t" style="left:1364.3px;top:681.4px;font-size:16px;line-height:20px;color:#252525;font-weight:bold;letter-spacing:0.96px;">344</div>
<div class="t" style="left:595.7px;top:704.4px;font-size:16px;line-height:20px;color:#4a4a4a;font-weight:bold;letter-spacing:0.38px;">Organization 2</div>
<svg style="left:570.8px;top:707.9px" width="11" height="11" viewBox="0 0 11 11"><rect x=".5" y=".5" width="10" height="10" fill="#fff" stroke="#a6a6a6"/><path d="M2.6 5.5h5.8" stroke="#8a8a8a" stroke-width="1"/></svg>
<div class="t" style="left:774.4px;top:704.4px;font-size:16px;line-height:20px;color:#252525;font-weight:bold;letter-spacing:0.70px;">47 000</div>
<div class="t" style="left:857.5px;top:704.4px;font-size:16px;line-height:20px;color:#252525;font-weight:bold;letter-spacing:0.64px;">16 172 916</div>
<div class="t" style="left:1003.0px;top:704.4px;font-size:16px;line-height:20px;color:#252525;font-weight:bold;letter-spacing:0.64px;">8 340 973</div>
<div class="t" style="left:1108.5px;top:704.4px;font-size:16px;line-height:20px;color:#252525;font-weight:bold;letter-spacing:0.78px;">51,57%</div>
<div class="t" style="left:1225.6px;top:704.4px;font-size:16px;line-height:20px;color:#252525;font-weight:bold;letter-spacing:0.82px;">1,14%</div>
<div class="t" style="left:1364.3px;top:704.4px;font-size:16px;line-height:20px;color:#252525;font-weight:bold;letter-spacing:0.96px;">344</div>
<div class="t" style="left:608.2px;top:727.4px;font-size:16px;line-height:20px;color:#6e6e6e;letter-spacing:0.31px;">Product 1079</div>
<div class="t" style="left:786.4px;top:727.4px;font-size:16px;line-height:20px;color:#555;letter-spacing:0.12px;">1 000</div>
<div class="t" style="left:862.3px;top:727.4px;font-size:16px;line-height:20px;color:#555;letter-spacing:0.11px;">15 752 100</div>
<div class="t" style="left:1007.3px;top:727.4px;font-size:16px;line-height:20px;color:#555;letter-spacing:0.11px;">8 147 736</div>
<div class="t" style="left:1111.8px;top:727.4px;font-size:16px;line-height:20px;color:#555;letter-spacing:0.13px;">51,72%</div>
<div class="t" style="left:1228.3px;top:727.4px;font-size:16px;line-height:20px;color:#555;letter-spacing:0.14px;">1,12%</div>
<div class="t" style="left:1347.9px;top:727.4px;font-size:16px;line-height:20px;color:#555;letter-spacing:0.13px;">15752</div>
<div class="t" style="left:608.2px;top:750.4px;font-size:16px;line-height:20px;color:#6e6e6e;letter-spacing:0.31px;">Product 225</div>
<div class="t" style="left:786.4px;top:750.4px;font-size:16px;line-height:20px;color:#555;letter-spacing:0.12px;">1 000</div>
<div class="t" style="left:886.0px;top:750.4px;font-size:16px;line-height:20px;color:#555;letter-spacing:0.11px;">117 766</div>
<div class="t" style="left:1029.8px;top:750.4px;font-size:16px;line-height:20px;color:#555;letter-spacing:0.12px;">77 836</div>
<div class="t" style="left:1111.8px;top:750.4px;font-size:16px;line-height:20px;color:#555;letter-spacing:0.13px;">66,09%</div>
<div class="t" style="left:1228.3px;top:750.4px;font-size:16px;line-height:20px;color:#555;letter-spacing:0.14px;">0,01%</div>
<div class="t" style="left:1367.1px;top:750.4px;font-size:16px;line-height:20px;color:#555;letter-spacing:0.15px;">118</div>
<div class="t" style="left:608.2px;top:773.4px;font-size:16px;line-height:20px;color:#6e6e6e;letter-spacing:0.31px;">Product 534</div>
<div class="t" style="left:799.9px;top:773.4px;font-size:16px;line-height:20px;color:#555;letter-spacing:0.16px;">500</div>
<div class="t" style="left:893.8px;top:773.4px;font-size:16px;line-height:20px;color:#555;letter-spacing:0.12px;">44 128</div>
<div class="t" style="left:1029.8px;top:773.4px;font-size:16px;line-height:20px;color:#555;letter-spacing:0.12px;">41 396</div>
<div class="t" style="left:1111.8px;top:773.4px;font-size:16px;line-height:20px;color:#555;letter-spacing:0.13px;">93,81%</div>
<div class="t" style="left:1228.3px;top:773.4px;font-size:16px;line-height:20px;color:#555;letter-spacing:0.14px;">0,01%</div>
<div class="t" style="left:1374.9px;top:773.4px;font-size:16px;line-height:20px;color:#555;letter-spacing:0.21px;">88</div>
<div class="t" style="left:608.2px;top:796.4px;font-size:16px;line-height:20px;color:#6e6e6e;letter-spacing:0.31px;">Product 474</div>
<div class="t" style="left:786.4px;top:796.4px;font-size:16px;line-height:20px;color:#555;letter-spacing:0.12px;">4 000</div>
<div class="t" style="left:893.8px;top:796.4px;font-size:16px;line-height:20px;color:#555;letter-spacing:0.12px;">97 308</div>
<div class="t" style="left:1029.8px;top:796.4px;font-size:16px;line-height:20px;color:#555;letter-spacing:0.12px;">40 968</div>
<div class="t" style="left:1111.8px;top:796.4px;font-size:16px;line-height:20px;color:#555;letter-spacing:0.13px;">42,10%</div>
<div class="t" style="left:1228.3px;top:796.4px;font-size:16px;line-height:20px;color:#555;letter-spacing:0.14px;">0,01%</div>
<div class="t" style="left:1374.9px;top:796.4px;font-size:16px;line-height:20px;color:#555;letter-spacing:0.21px;">24</div>
<div class="t" style="left:608.2px;top:819.4px;font-size:16px;line-height:20px;color:#6e6e6e;letter-spacing:0.31px;">Product 907</div>
<div class="t" style="left:786.4px;top:819.4px;font-size:16px;line-height:20px;color:#555;letter-spacing:0.12px;">2 000</div>
<div class="t" style="left:893.8px;top:819.4px;font-size:16px;line-height:20px;color:#555;letter-spacing:0.12px;">36 348</div>
<div class="t" style="left:1029.8px;top:819.4px;font-size:16px;line-height:20px;color:#555;letter-spacing:0.12px;">16 738</div>
<div class="t" style="left:1111.8px;top:819.4px;font-size:16px;line-height:20px;color:#555;letter-spacing:0.13px;">46,05%</div>
<div class="t" style="left:1228.3px;top:819.4px;font-size:16px;line-height:20px;color:#555;letter-spacing:0.14px;">0,00%</div>
<div class="t" style="left:1374.9px;top:819.4px;font-size:16px;line-height:20px;color:#555;letter-spacing:0.21px;">18</div>
<div class="t" style="left:608.2px;top:842.4px;font-size:16px;line-height:20px;color:#6e6e6e;letter-spacing:0.42px;">Product 1108</div>
<div class="t" style="left:786.4px;top:842.4px;font-size:16px;line-height:20px;color:#555;letter-spacing:0.12px;">1 500</div>
<div class="t" style="left:893.8px;top:842.4px;font-size:16px;line-height:20px;color:#555;letter-spacing:0.12px;">22 538</div>
<div class="t" style="left:1038.8px;top:842.4px;font-size:16px;line-height:20px;color:#555;letter-spacing:0.12px;">9 149</div>
<div class="t" style="left:1111.8px;top:842.4px;font-size:16px;line-height:20px;color:#555;letter-spacing:0.13px;">40,59%</div>
<div class="t" style="left:1228.3px;top:842.4px;font-size:16px;line-height:20px;color:#555;letter-spacing:0.14px;">0,00%</div>
<div class="t" style="left:1374.9px;top:842.4px;font-size:16px;line-height:20px;color:#555;letter-spacing:0.21px;">15</div>
<div class="t" style="left:608.2px;top:865.4px;font-size:16px;line-height:20px;color:#6e6e6e;letter-spacing:0.31px;">Product 199</div>
<div class="t" style="left:786.4px;top:865.4px;font-size:16px;line-height:20px;color:#555;letter-spacing:0.12px;">1 500</div>
<div class="t" style="left:893.8px;top:865.4px;font-size:16px;line-height:20px;color:#555;letter-spacing:0.12px;">98 813</div>
<div class="t" style="left:1038.8px;top:865.4px;font-size:16px;line-height:20px;color:#555;letter-spacing:0.12px;">5 787</div>
<div class="t" style="left:1120.8px;top:865.4px;font-size:16px;line-height:20px;color:#555;letter-spacing:0.14px;">5,86%</div>
<div class="t" style="left:1228.3px;top:865.4px;font-size:16px;line-height:20px;color:#555;letter-spacing:0.14px;">0,00%</div>
<div class="t" style="left:1374.9px;top:865.4px;font-size:16px;line-height:20px;color:#555;letter-spacing:0.21px;">66</div>
<div class="t" style="left:582.3px;top:892.1px;font-size:15.4px;line-height:20px;color:#111;font-weight:bold;letter-spacing:-0.36px;">Total</div>
<div class="t" style="left:749.3px;top:892.0px;font-size:15.5px;line-height:20px;color:#111;font-weight:bold;">94 670 381</div>
<div class="t" style="left:844.2px;top:892.0px;font-size:15.5px;line-height:20px;color:#111;font-weight:bold;">1 450 195 303</div>
<div class="t" style="left:993.1px;top:892.0px;font-size:15.5px;line-height:20px;color:#111;font-weight:bold;">729 019 327</div>
<div class="t" style="left:1114.1px;top:892.0px;font-size:15.5px;line-height:20px;color:#111;font-weight:bold;">50,27%</div>
<div class="t" style="left:1213.0px;top:892.0px;font-size:15.5px;line-height:20px;color:#111;font-weight:bold;">100,00%</div>
<div class="t" style="left:1375.7px;top:892.0px;font-size:15.5px;line-height:20px;color:#111;font-weight:bold;">15</div>
<div style="left:1611.3px;top:556px;width:9.6px;height:344px;background:#f1f1f1"></div>
<div style="left:1611.3px;top:586.6px;width:9.6px;height:22.2px;background:#c9c9c9"></div>
<svg style="left:1610px;top:562px" width="14" height="12" viewBox="0 0 14 12"><path d="M3 9l4-5.4L11 9" fill="none" stroke="#555" stroke-width="1.3"/></svg>
<svg style="left:1610px;top:877px" width="14" height="12" viewBox="0 0 14 12"><path d="M3 3.4l4 5.6 4-5.6" fill="none" stroke="#555" stroke-width="1.3"/></svg>
</body></html>
